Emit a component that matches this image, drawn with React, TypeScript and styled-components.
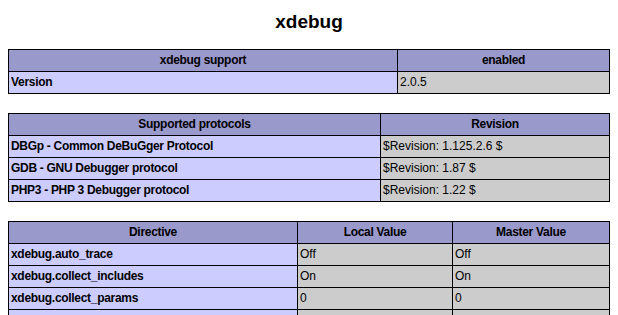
import React from "react";
import styled, { createGlobalStyle } from "styled-components";

const GlobalStyle = createGlobalStyle`
  html, body { margin: 0; padding: 0; background: #ffffff; }
  body { font-family: "Liberation Sans", Arial, sans-serif; color: #000000; }
`;

const Page = styled.div`
  padding: 0 8px;
`;

const Title = styled.h2`
  margin: 11px 0 16px;
  font-size: 19px;
  line-height: 22px;
  font-weight: bold;
  text-align: center;
`;

const Table = styled.table`
  border-collapse: collapse;
  table-layout: fixed;
  width: 601px;
  margin-bottom: 19px;
`;

const Th = styled.th`
  background: #9999cc;
  border: 1px solid #000000;
  font-size: 12px;
  line-height: 15px;
  padding: 3px;
  font-weight: bold;
  letter-spacing: -0.3px;
  text-align: center;
  height: 15px;
`;

const Td = styled.td<{ $kind: "e" | "v" }>`
  background: ${(p) => (p.$kind === "e" ? "#ccccff" : "#cccccc")};
  font-weight: ${(p) => (p.$kind === "e" ? "bold" : "normal")};
  letter-spacing: ${(p) => (p.$kind === "e" ? "-0.3px" : "0")};
  border: 1px solid #000000;
  font-size: 12px;
  line-height: 15px;
  padding: 3px 2px;
  text-align: left;
  height: 15px;
  white-space: nowrap;
  overflow: hidden;
`;

type Section = {
  cols: number[];
  head: string[];
  rows: string[][];
};

const sections: Section[] = [
  {
    cols: [389, 212],
    head: ["xdebug support", "enabled"],
    rows: [["Version", "2.0.5"]],
  },
  {
    cols: [372, 229],
    head: ["Supported protocols", "Revision"],
    rows: [
      ["DBGp - Common DeBuGger Protocol", "$Revision: 1.125.2.6 $"],
      ["GDB - GNU Debugger protocol", "$Revision: 1.87 $"],
      ["PHP3 - PHP 3 Debugger protocol", "$Revision: 1.22 $"],
    ],
  },
  {
    cols: [289, 155, 157],
    head: ["Directive", "Local Value", "Master Value"],
    rows: [
      ["xdebug.auto_trace", "Off", "Off"],
      ["xdebug.collect_includes", "On", "On"],
      ["xdebug.collect_params", "0", "0"],
      ["xdebug.collect_return", "Off", "Off"],
      ["xdebug.collect_vars", "Off", "Off"],
    ],
  },
];

export default function App() {
  return (
    <>
      <GlobalStyle />
      <Page>
        <Title>xdebug</Title>
        {sections.map((s, i) => (
          <Table key={i}>
            <colgroup>
              {s.cols.map((w, j) => (
                <col key={j} style={{ width: w }} />
              ))}
            </colgroup>
            <thead>
              <tr>
                {s.head.map((h, j) => (
                  <Th key={j}>{h}</Th>
                ))}
              </tr>
            </thead>
            <tbody>
              {s.rows.map((r, k) => (
                <tr key={k}>
                  {r.map((c, j) => (
                    <Td key={j} $kind={j === 0 ? "e" : "v"}>
                      {c}
                    </Td>
                  ))}
                </tr>
              ))}
            </tbody>
          </Table>
        ))}
      </Page>
    </>
  );
}
